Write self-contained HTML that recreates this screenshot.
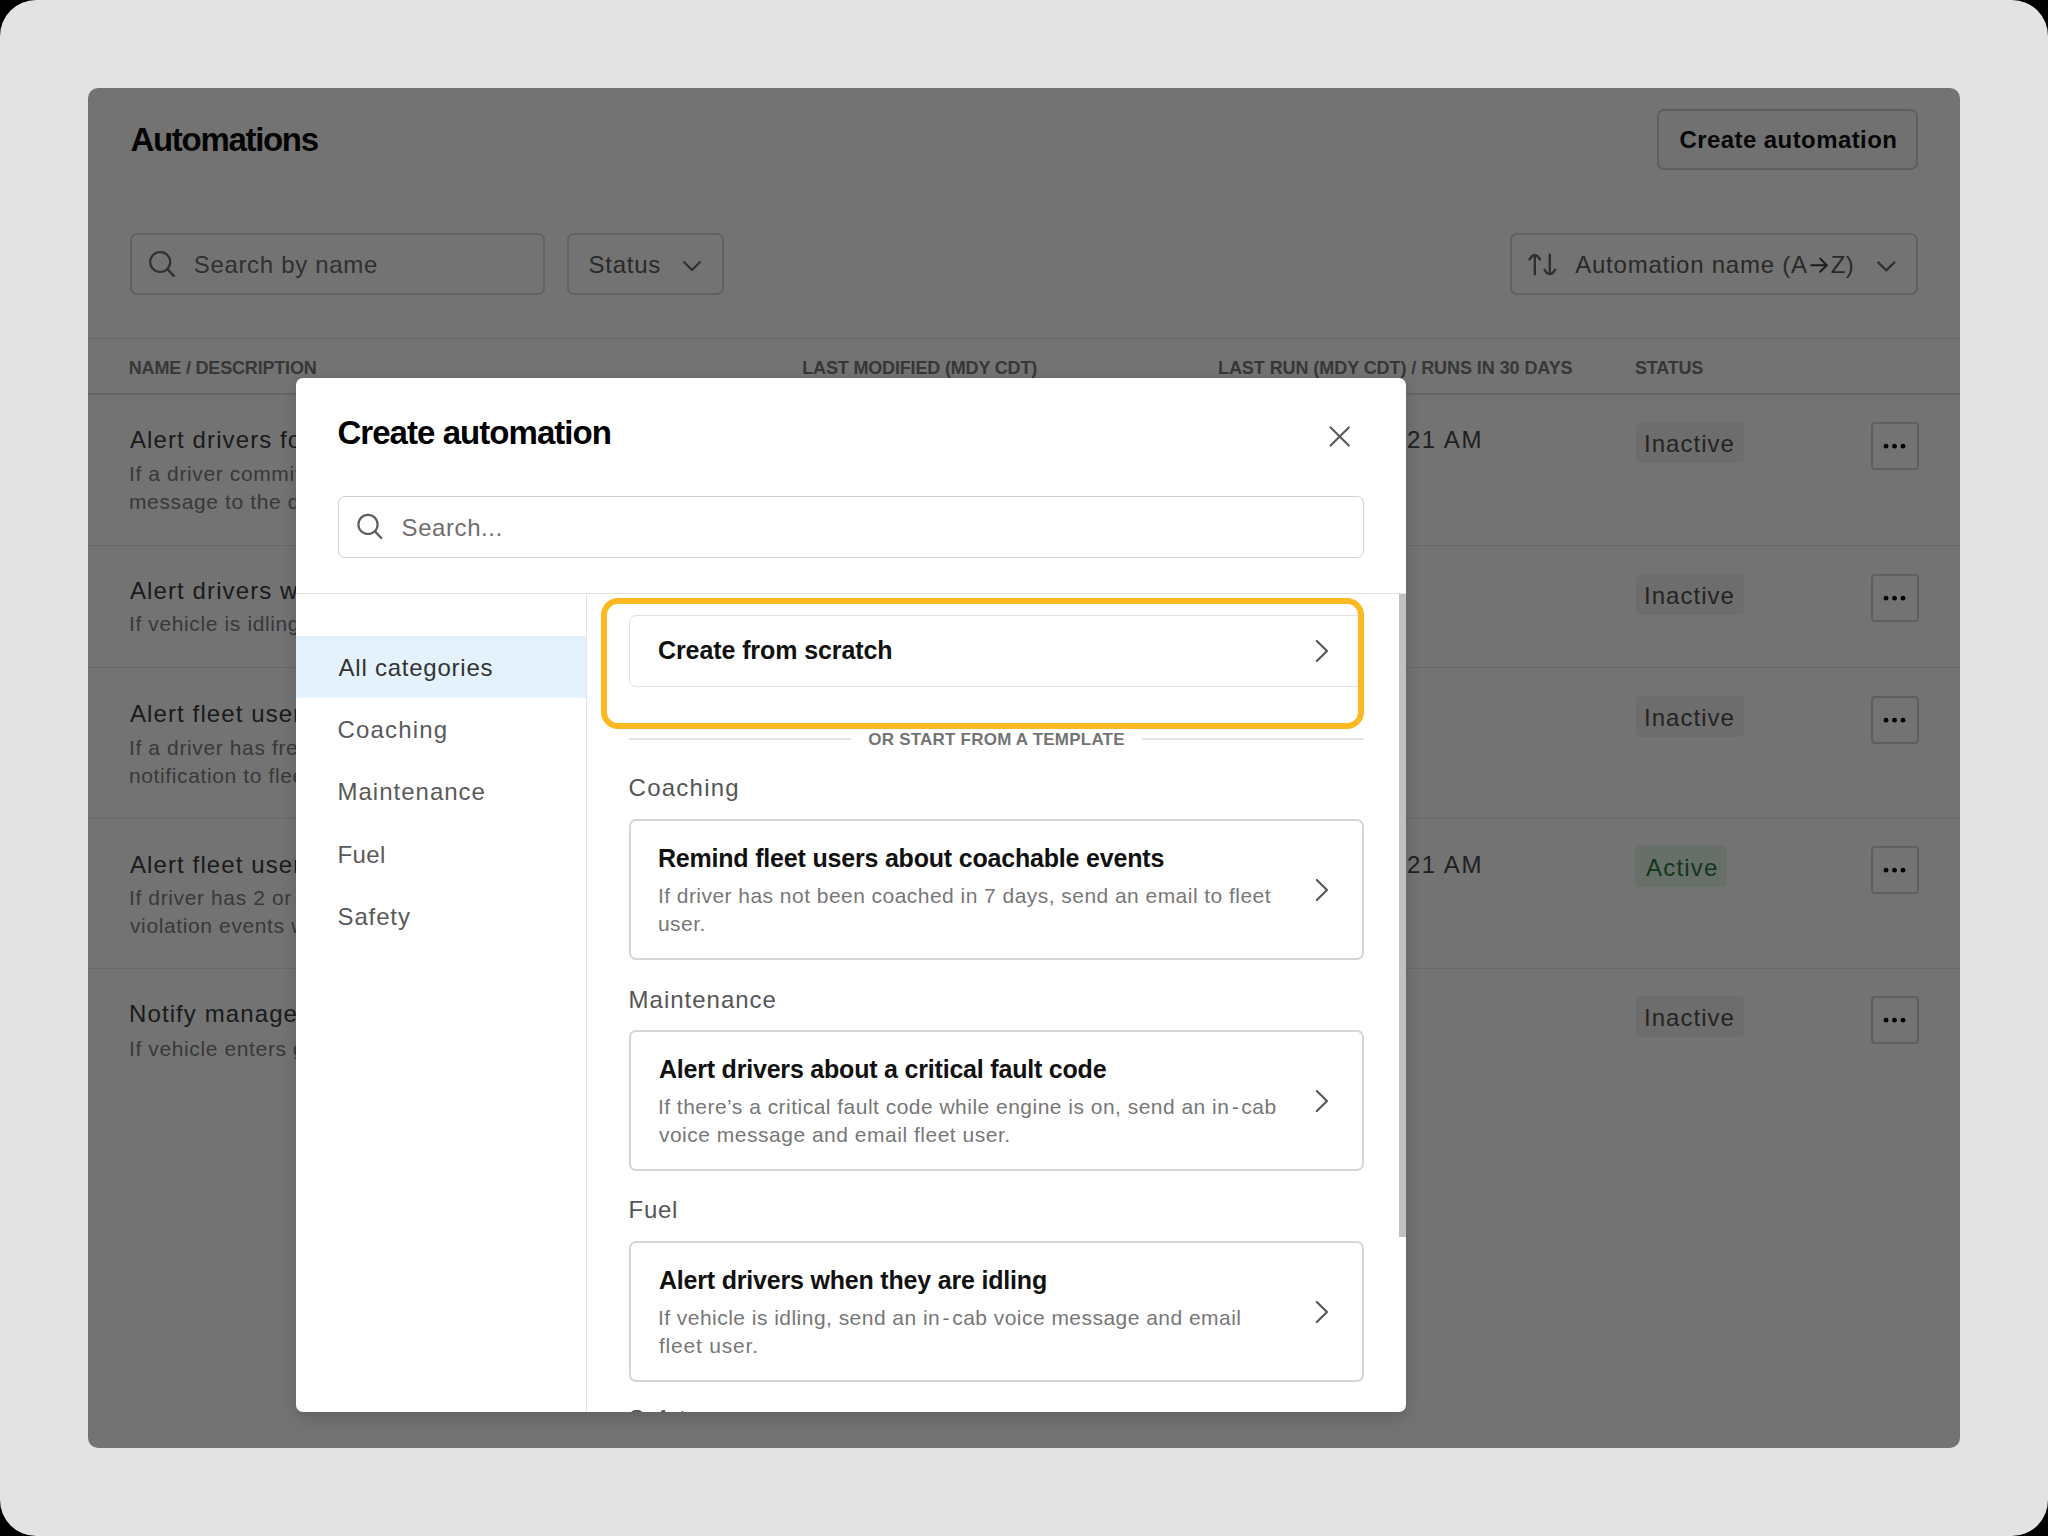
<!DOCTYPE html>
<html><head><meta charset="utf-8"><title>Create automation</title>
<style>
html,body{margin:0;padding:0;}
body{width:2048px;height:1536px;background:#000;overflow:hidden;position:relative;font-family:'Liberation Sans', sans-serif;}
.frame{position:absolute;left:0;top:0;width:2048px;height:1536px;background:#e3e3e3;border-radius:36px;overflow:hidden;}
.app{position:absolute;left:88px;top:88px;width:1872px;height:1360px;background:#fff;border-radius:10px;overflow:hidden;}
.overlay{position:absolute;left:0;top:0;width:1872px;height:1360px;background:rgba(0,0,0,.55);}
.modal{position:absolute;left:208px;top:290px;width:1110px;height:1034px;background:#fff;border-radius:7px;overflow:hidden;box-shadow:0 5px 16px rgba(0,0,0,.17);}
.t{position:absolute;white-space:pre;font-family:'Liberation Sans', sans-serif;}
.b{position:absolute;}
</style></head>
<body>
<div class="frame">
<div class="app">
<header class="page">
<div class="b" style="left:1569.0px;top:21.0px;width:261.0px;height:61.0px;border:2px solid #d0d0d0;border-radius:7px;background:#fafafa;box-sizing:border-box"></div>
<div class="b" style="left:42.0px;top:145.0px;width:415.0px;height:62.0px;border:2px solid #d6d6d6;border-radius:7px;box-sizing:border-box"></div>
<svg class="b" style="left:57.0px;top:159.0px;" width="34" height="34" viewBox="145 247 34 34"><circle cx="160.2" cy="262" r="10" fill="none" stroke="#6a6a6a" stroke-width="2.2"/><line x1="167.6" y1="269.4" x2="173.8" y2="275.8" stroke="#6a6a6a" stroke-width="2.4" stroke-linecap="round"/></svg>
<div class="b" style="left:479.0px;top:145.0px;width:157.0px;height:62.0px;border:2px solid #d6d6d6;border-radius:7px;box-sizing:border-box"></div>
<svg class="b" style="left:592.0px;top:168.0px;" width="24" height="20" viewBox="680 256 24 20"><polyline points="684.2,262.2 692,270 699.8,262.2" fill="none" stroke="#6a6a6a" stroke-width="2.2" stroke-linecap="round" stroke-linejoin="round"/></svg>
<div class="b" style="left:1422.0px;top:145.0px;width:408.0px;height:62.0px;border:2px solid #d6d6d6;border-radius:7px;box-sizing:border-box"></div>
<svg class="b" style="left:1436.0px;top:162.0px;" width="36" height="30" viewBox="1524 250 36 30"><g fill="none" stroke="#6a6a6a" stroke-width="2.4" stroke-linecap="round"><line x1="1534.8" y1="255.4" x2="1534.8" y2="274.3"/><path d="M1529.6 259.4 Q1534.8 250.6 1540 259.4"/><line x1="1549.8" y1="254.8" x2="1549.8" y2="273.6"/><path d="M1544.6 269.8 Q1549.8 278.4 1555 269.8"/></g></svg>
<svg class="b" style="left:1720.0px;top:167.0px;" width="22" height="22" viewBox="1808 255 22 22"><g fill="none" stroke="#3e3e3e" stroke-width="2" stroke-linecap="round" stroke-linejoin="round"><line x1="1811.2" y1="265.2" x2="1826.6" y2="265.2"/><polyline points="1820.2,258.6 1826.8,265.2 1820.2,271.8"/></g></svg>
<svg class="b" style="left:1785.0px;top:168.0px;" width="26" height="20" viewBox="1873 256 26 20"><polyline points="1878.2,262.4 1886.3,270.4 1894.4,262.4" fill="none" stroke="#6a6a6a" stroke-width="2.2" stroke-linecap="round" stroke-linejoin="round"/></svg>
<div class="b" style="left:0.0px;top:249.5px;width:1872.0px;height:1.5px;background:#e2e2e2"></div>
<div class="b" style="left:0.0px;top:305.0px;width:1872.0px;height:2.0px;background:#e2e2e2"></div>
<div class="b" style="left:1547.5px;top:334.0px;width:108.2px;height:40.5px;background:#f1f1f1;border-radius:5px"></div>
<div class="b" style="left:1783.0px;top:334.0px;width:47.6px;height:47.6px;border:2px solid #d2d2d2;border-radius:4px;box-sizing:border-box"></div>
<svg class="b" style="left:1792.0px;top:352.0px;" width="30" height="12" viewBox="1880 440 30 12"><circle cx="1886" cy="446.2" r="2.4" fill="#000"/><circle cx="1894.5" cy="446.2" r="2.4" fill="#000"/><circle cx="1903" cy="446.2" r="2.4" fill="#000"/></svg>
<div class="b" style="left:0.0px;top:456.5px;width:1872.0px;height:1.5px;background:#e9e9e9"></div>
<div class="b" style="left:1547.5px;top:486.0px;width:108.2px;height:40.5px;background:#f1f1f1;border-radius:5px"></div>
<div class="b" style="left:1783.0px;top:486.0px;width:47.6px;height:47.6px;border:2px solid #d2d2d2;border-radius:4px;box-sizing:border-box"></div>
<svg class="b" style="left:1792.0px;top:504.0px;" width="30" height="12" viewBox="1880 592 30 12"><circle cx="1886" cy="598.2" r="2.4" fill="#000"/><circle cx="1894.5" cy="598.2" r="2.4" fill="#000"/><circle cx="1903" cy="598.2" r="2.4" fill="#000"/></svg>
<div class="b" style="left:0.0px;top:578.5px;width:1872.0px;height:1.5px;background:#e9e9e9"></div>
<div class="b" style="left:1547.5px;top:608.0px;width:108.2px;height:40.5px;background:#f1f1f1;border-radius:5px"></div>
<div class="b" style="left:1783.0px;top:608.0px;width:47.6px;height:47.6px;border:2px solid #d2d2d2;border-radius:4px;box-sizing:border-box"></div>
<svg class="b" style="left:1792.0px;top:626.0px;" width="30" height="12" viewBox="1880 714 30 12"><circle cx="1886" cy="720.2" r="2.4" fill="#000"/><circle cx="1894.5" cy="720.2" r="2.4" fill="#000"/><circle cx="1903" cy="720.2" r="2.4" fill="#000"/></svg>
<div class="b" style="left:0.0px;top:729.5px;width:1872.0px;height:1.5px;background:#e9e9e9"></div>
<div class="b" style="left:1546.8px;top:758.0px;width:92.7px;height:41.4px;background:#e2f5e6;border-radius:5px"></div>
<div class="b" style="left:1783.0px;top:758.0px;width:47.6px;height:47.6px;border:2px solid #d2d2d2;border-radius:4px;box-sizing:border-box"></div>
<svg class="b" style="left:1792.0px;top:776.0px;" width="30" height="12" viewBox="1880 864 30 12"><circle cx="1886" cy="870.2" r="2.4" fill="#000"/><circle cx="1894.5" cy="870.2" r="2.4" fill="#000"/><circle cx="1903" cy="870.2" r="2.4" fill="#000"/></svg>
<div class="b" style="left:0.0px;top:879.5px;width:1872.0px;height:1.5px;background:#e9e9e9"></div>
<div class="b" style="left:1547.5px;top:908.0px;width:108.2px;height:40.5px;background:#f1f1f1;border-radius:5px"></div>
<div class="b" style="left:1783.0px;top:908.0px;width:47.6px;height:47.6px;border:2px solid #d2d2d2;border-radius:4px;box-sizing:border-box"></div>
<svg class="b" style="left:1792.0px;top:926.0px;" width="30" height="12" viewBox="1880 1014 30 12"><circle cx="1886" cy="1020.2" r="2.4" fill="#000"/><circle cx="1894.5" cy="1020.2" r="2.4" fill="#000"/><circle cx="1903" cy="1020.2" r="2.4" fill="#000"/></svg>
<div class="t" style="left:42.5px;top:35px;font-size:33px;line-height:33px;font-weight:700;color:#0a0a0a;letter-spacing:-1.31px;">Automations</div>
<div class="t" style="left:1591.5px;top:40px;font-size:24px;line-height:24px;font-weight:700;color:#111;letter-spacing:0.42px;">Create automation</div>
<div class="t" style="left:105.7px;top:165px;font-size:24px;line-height:24px;color:#6b6b6b;letter-spacing:0.68px;">Search by name</div>
<div class="t" style="left:500.6px;top:165px;font-size:24px;line-height:24px;color:#5c5c5c;letter-spacing:0.73px;">Status</div>
<div class="t" style="left:1487.2px;top:165px;font-size:24px;line-height:24px;color:#5c5c5c;letter-spacing:0.77px;">Automation name (A</div>
<div class="t" style="left:1742.7px;top:165px;font-size:24px;line-height:24px;color:#5c5c5c;letter-spacing:0.34px;">Z)</div>
<div class="t" style="left:40.8px;top:271px;font-size:18px;line-height:18px;font-weight:700;color:#7a7a7a;letter-spacing:-0.18px;">NAME / DESCRIPTION</div>
<div class="t" style="left:714.3px;top:271px;font-size:18px;line-height:18px;font-weight:700;color:#7a7a7a;letter-spacing:-0.17px;">LAST MODIFIED (MDY CDT)</div>
<div class="t" style="left:1130.0px;top:271px;font-size:18px;line-height:18px;font-weight:700;color:#7a7a7a;letter-spacing:-0.07px;">LAST RUN (MDY CDT) / RUNS IN 30 DAYS</div>
<div class="t" style="left:1547.0px;top:271px;font-size:18px;line-height:18px;font-weight:700;color:#7a7a7a;letter-spacing:-0.20px;">STATUS</div>
<div class="t" style="left:42.0px;top:340px;font-size:24px;line-height:24px;color:#3c3c3c;letter-spacing:1.10px;">Alert drivers for harsh driving events</div>
<div class="t" style="left:41.0px;top:375px;font-size:21px;line-height:21px;color:#7e7e7e;letter-spacing:0.62px;">If a driver commits a harsh driving event, send an in-cab voice</div>
<div class="t" style="left:41.0px;top:403px;font-size:21px;line-height:21px;color:#7e7e7e;letter-spacing:0.62px;">message to the driver and email fleet users.</div>
<div class="t" style="left:1141.0px;top:340px;font-size:24px;line-height:24px;color:#474747;letter-spacing:1.09px;">10/24/2023, 9:</div>
<div class="t" style="left:1318.9px;top:340px;font-size:24px;line-height:24px;color:#474747;letter-spacing:1.61px;">21 AM</div>
<div class="t" style="left:1556.0px;top:344px;font-size:24px;line-height:24px;color:#505050;letter-spacing:1.02px;">Inactive</div>
<div class="t" style="left:42.0px;top:491px;font-size:24px;line-height:24px;color:#3c3c3c;letter-spacing:1.10px;">Alert drivers when they are idling</div>
<div class="t" style="left:41.0px;top:525px;font-size:21px;line-height:21px;color:#7e7e7e;letter-spacing:0.62px;">If vehicle is idling, send an in-cab voice message and email fleet user.</div>
<div class="t" style="left:1556.0px;top:496px;font-size:24px;line-height:24px;color:#505050;letter-spacing:1.02px;">Inactive</div>
<div class="t" style="left:42.0px;top:614px;font-size:24px;line-height:24px;color:#3c3c3c;letter-spacing:1.10px;">Alert fleet users about frequent speeding</div>
<div class="t" style="left:41.0px;top:649px;font-size:21px;line-height:21px;color:#7e7e7e;letter-spacing:0.62px;">If a driver has frequent speeding events, send an email</div>
<div class="t" style="left:41.0px;top:677px;font-size:21px;line-height:21px;color:#7e7e7e;letter-spacing:0.62px;">notification to fleet users.</div>
<div class="t" style="left:1556.0px;top:618px;font-size:24px;line-height:24px;color:#505050;letter-spacing:1.02px;">Inactive</div>
<div class="t" style="left:42.0px;top:765px;font-size:24px;line-height:24px;color:#3c3c3c;letter-spacing:1.10px;">Alert fleet users about HOS violations</div>
<div class="t" style="left:41.0px;top:799px;font-size:21px;line-height:21px;color:#7e7e7e;letter-spacing:0.62px;">If driver has 2 or more hours of service</div>
<div class="t" style="left:42.0px;top:827px;font-size:21px;line-height:21px;color:#7e7e7e;letter-spacing:0.62px;">violation events within a week, send an email.</div>
<div class="t" style="left:1141.0px;top:765px;font-size:24px;line-height:24px;color:#474747;letter-spacing:1.09px;">10/24/2023, 9:</div>
<div class="t" style="left:1318.9px;top:765px;font-size:24px;line-height:24px;color:#474747;letter-spacing:1.61px;">21 AM</div>
<div class="t" style="left:1558.0px;top:768px;font-size:24px;line-height:24px;color:#2a7a40;letter-spacing:1.20px;">Active</div>
<div class="t" style="left:41.0px;top:914px;font-size:24px;line-height:24px;color:#3c3c3c;letter-spacing:1.10px;">Notify managers when vehicles enter a geofence</div>
<div class="t" style="left:41.0px;top:950px;font-size:21px;line-height:21px;color:#7e7e7e;letter-spacing:0.62px;">If vehicle enters geofence, send an email to managers.</div>
<div class="t" style="left:1556.0px;top:918px;font-size:24px;line-height:24px;color:#505050;letter-spacing:1.02px;">Inactive</div>

</header>
<div class="overlay"></div>
<div class="modal" role="dialog">
<svg class="b" style="left:1029.0px;top:44.0px;" width="30" height="30" viewBox="1325 422 30 30"><g stroke="#5a5a5a" stroke-width="2.1" stroke-linecap="round"><line x1="1330.6" y1="427.4" x2="1348.8" y2="445.6"/><line x1="1348.8" y1="427.4" x2="1330.6" y2="445.6"/></g></svg>
<div class="b" style="left:42.0px;top:118.0px;width:1025.5px;height:61.5px;border:1.5px solid #cfcfcf;border-radius:7px;box-sizing:border-box"></div>
<svg class="b" style="left:57.0px;top:132.0px;" width="34" height="34" viewBox="353 510 34 34"><circle cx="368" cy="524.4" r="9.6" fill="none" stroke="#5f5f5f" stroke-width="2.2"/><line x1="375.2" y1="531.6" x2="381.2" y2="538" stroke="#5f5f5f" stroke-width="2.4" stroke-linecap="round"/></svg>
<div class="b" style="left:0.0px;top:214.5px;width:1110.0px;height:1.5px;background:#e3e3e3"></div>
<div class="b" style="left:0.0px;top:257.5px;width:290.0px;height:62.5px;background:#e4f2fd"></div>
<div class="b" style="left:290.0px;top:216.0px;width:1.0px;height:818.0px;background:#e4e4e4"></div>
<div class="b" style="left:333.0px;top:237.0px;width:734.5px;height:72.0px;border:1.5px solid #e2e2e2;border-radius:7px;box-sizing:border-box;background:#fff"></div>
<svg class="b" style="left:1014.0px;top:257.0px;" width="24" height="32" viewBox="1310 635 24 32"><polyline points="1316.8,641 1327,651 1316.8,661" fill="none" stroke="#555" stroke-width="2.1" stroke-linecap="round" stroke-linejoin="round"/></svg>
<div class="b" style="left:305.0px;top:220.0px;width:762.5px;height:130.5px;border:6px solid #fdb922;border-radius:17px;box-sizing:border-box"></div>
<div class="b" style="left:333.0px;top:360.0px;width:222.0px;height:1.5px;background:#e3e3e3"></div>
<div class="b" style="left:846.0px;top:360.0px;width:222.0px;height:1.5px;background:#e3e3e3"></div>
<div class="b" style="left:333.0px;top:441.0px;width:734.5px;height:141.0px;border:2px solid #d6d6d6;border-radius:7px;box-sizing:border-box"></div>
<svg class="b" style="left:1014.0px;top:495.5px;" width="24" height="32" viewBox="1310 873.5 24 32"><polyline points="1316.8,879.5 1327,889.5 1316.8,899.5" fill="none" stroke="#555" stroke-width="2.1" stroke-linecap="round" stroke-linejoin="round"/></svg>
<div class="b" style="left:333.0px;top:652.0px;width:734.5px;height:141.0px;border:2px solid #d6d6d6;border-radius:7px;box-sizing:border-box"></div>
<svg class="b" style="left:1014.0px;top:706.5px;" width="24" height="32" viewBox="1310 1084.5 24 32"><polyline points="1316.8,1090.5 1327,1100.5 1316.8,1110.5" fill="none" stroke="#555" stroke-width="2.1" stroke-linecap="round" stroke-linejoin="round"/></svg>
<div class="b" style="left:333.0px;top:863.0px;width:734.5px;height:141.0px;border:2px solid #d6d6d6;border-radius:7px;box-sizing:border-box"></div>
<svg class="b" style="left:1014.0px;top:917.5px;" width="24" height="32" viewBox="1310 1295.5 24 32"><polyline points="1316.8,1301.5 1327,1311.5 1316.8,1321.5" fill="none" stroke="#555" stroke-width="2.1" stroke-linecap="round" stroke-linejoin="round"/></svg>
<div class="b" style="left:1103.0px;top:216.0px;width:7.0px;height:643.0px;background:#c1c1c1"></div>
<div class="t" style="left:41.4px;top:38px;font-size:33px;line-height:33px;font-weight:700;color:#000;letter-spacing:-0.95px;">Create automation</div>
<div class="t" style="left:105.6px;top:138px;font-size:24px;line-height:24px;color:#6e6e6e;letter-spacing:0.57px;">Search...</div>
<div class="t" style="left:42.5px;top:278px;font-size:24px;line-height:24px;color:#333;letter-spacing:0.77px;">All categories</div>
<div class="t" style="left:41.5px;top:340px;font-size:24px;line-height:24px;color:#5a5a5a;letter-spacing:1.16px;">Coaching</div>
<div class="t" style="left:41.5px;top:402px;font-size:24px;line-height:24px;color:#5a5a5a;letter-spacing:1.00px;">Maintenance</div>
<div class="t" style="left:41.5px;top:465px;font-size:24px;line-height:24px;color:#5a5a5a;letter-spacing:0.38px;">Fuel</div>
<div class="t" style="left:41.5px;top:527px;font-size:24px;line-height:24px;color:#5a5a5a;letter-spacing:0.87px;">Safety</div>
<div class="t" style="left:362.0px;top:260px;font-size:25px;line-height:25px;font-weight:700;color:#111;letter-spacing:-0.09px;">Create from scratch</div>
<div class="t" style="left:572.3px;top:353px;font-size:17px;line-height:17px;font-weight:700;color:#747474;letter-spacing:0.22px;">OR START FROM A TEMPLATE</div>
<div class="t" style="left:332.6px;top:398px;font-size:24px;line-height:24px;color:#555;letter-spacing:1.24px;">Coaching</div>
<div class="t" style="left:361.9px;top:468px;font-size:25px;line-height:25px;font-weight:700;color:#111;letter-spacing:-0.19px;">Remind fleet users about coachable events</div>
<div class="t" style="left:361.9px;top:507px;font-size:21px;line-height:21px;color:#777;letter-spacing:0.46px;">If driver has not been coached in 7 days, send an email to fleet</div>
<div class="t" style="left:361.9px;top:535px;font-size:21px;line-height:21px;color:#777;letter-spacing:0.50px;">user.</div>
<div class="t" style="left:332.6px;top:610px;font-size:24px;line-height:24px;color:#555;letter-spacing:0.99px;">Maintenance</div>
<div class="t" style="left:362.9px;top:679px;font-size:25px;line-height:25px;font-weight:700;color:#111;letter-spacing:-0.20px;">Alert drivers about a critical fault code</div>
<div class="t" style="left:361.9px;top:718px;font-size:21px;line-height:21px;color:#777;letter-spacing:0.48px;">If there’s a critical fault code while engine is on, send an in - cab</div>
<div class="t" style="left:362.9px;top:746px;font-size:21px;line-height:21px;color:#777;letter-spacing:0.51px;">voice message and email fleet user.</div>
<div class="t" style="left:332.6px;top:820px;font-size:24px;line-height:24px;color:#555;letter-spacing:0.65px;">Fuel</div>
<div class="t" style="left:362.9px;top:890px;font-size:25px;line-height:25px;font-weight:700;color:#111;letter-spacing:-0.19px;">Alert drivers when they are idling</div>
<div class="t" style="left:361.9px;top:929px;font-size:21px;line-height:21px;color:#777;letter-spacing:0.47px;">If vehicle is idling, send an in - cab voice message and email</div>
<div class="t" style="left:362.9px;top:957px;font-size:21px;line-height:21px;color:#777;letter-spacing:0.81px;">fleet user.</div>
<div class="t" style="left:332.6px;top:1029px;font-size:24px;line-height:24px;color:#555;letter-spacing:0.30px;">Safety</div>

</div>
</div>
</div>
</body></html>
